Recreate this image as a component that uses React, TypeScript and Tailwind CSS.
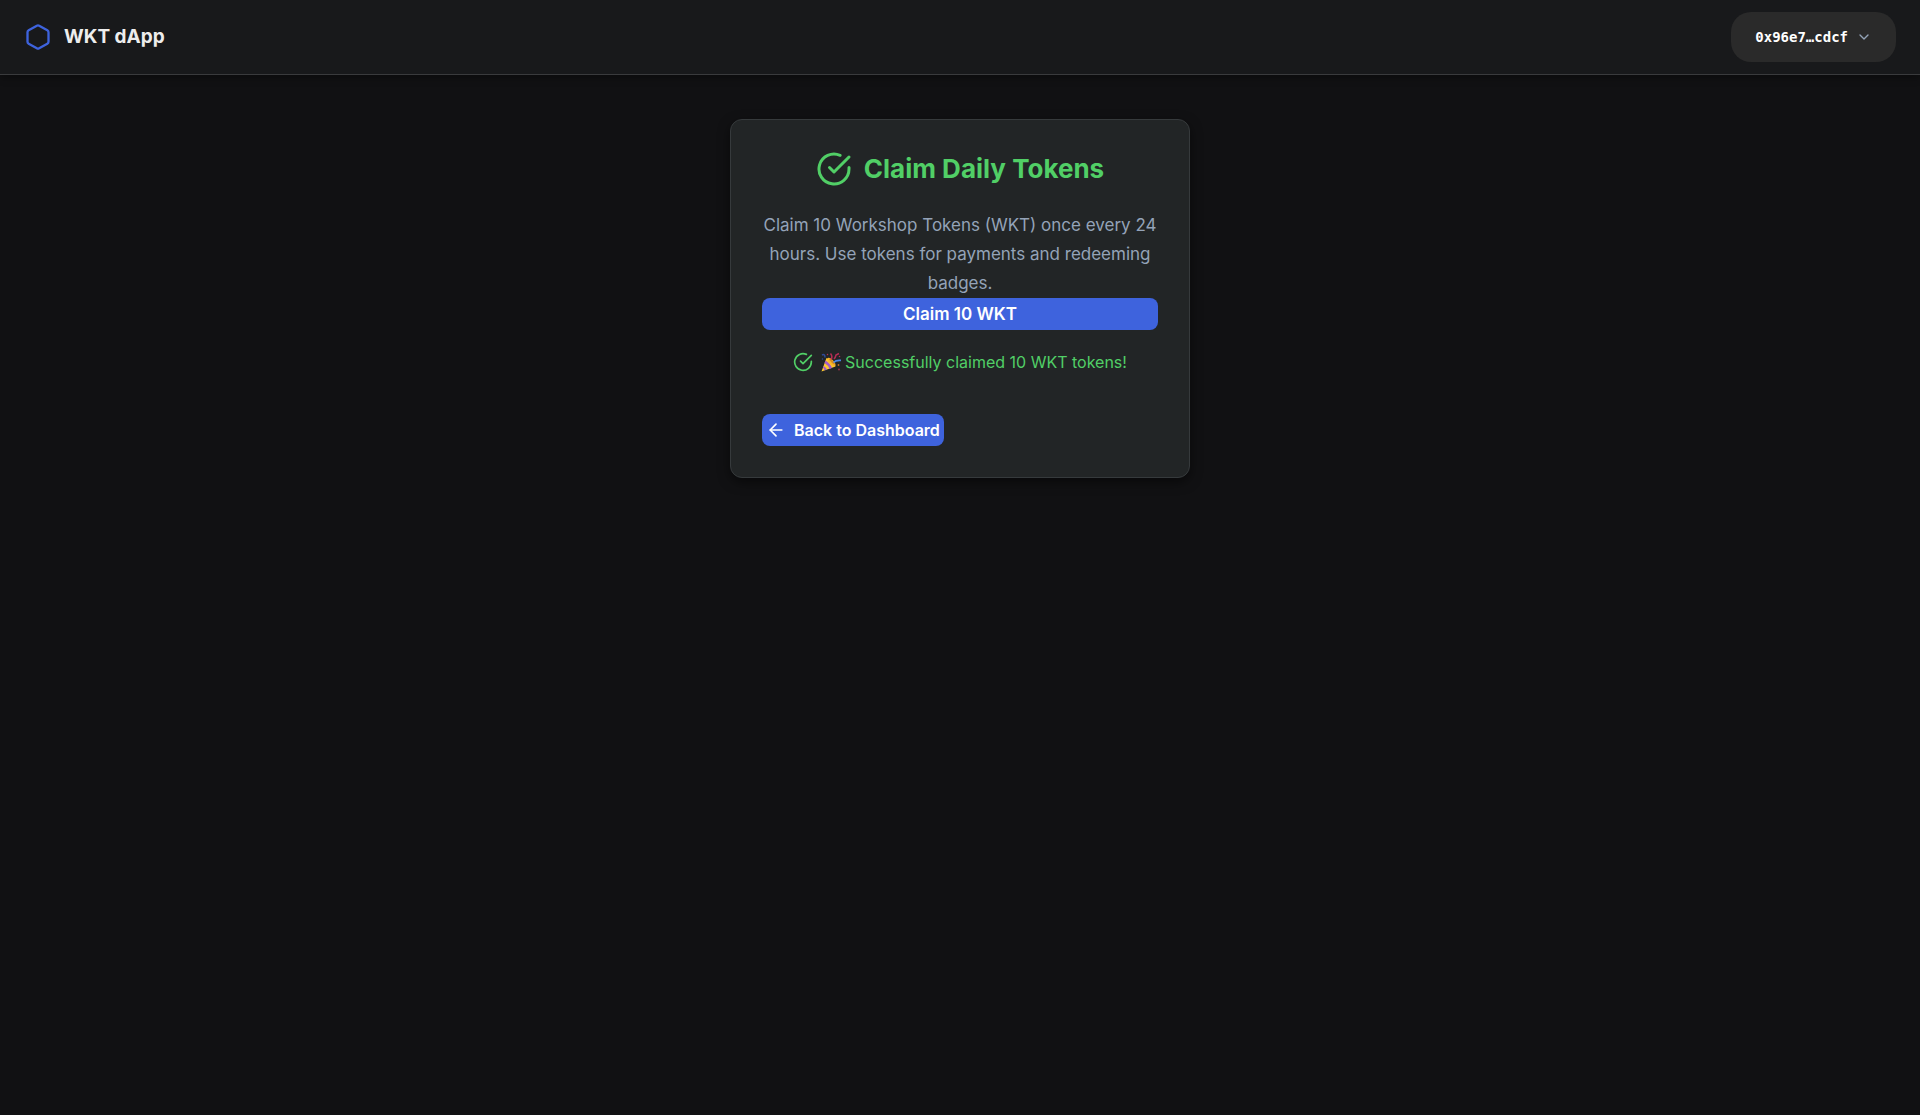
import React from "react";
import { ArrowLeft, ChevronDown, Hexagon } from "lucide-react";

function CheckCircle({ className }: { className: string }) {
  return (
    <svg
      viewBox="0 0 24 24"
      fill="none"
      stroke="currentColor"
      strokeWidth="2"
      strokeLinecap="round"
      strokeLinejoin="round"
      className={className}
      aria-hidden="true"
    >
      <path d="M22 11.08V12a10 10 0 1 1-5.93-9.14" />
      <path d="M22 4 12 14.010l-3-3" />
    </svg>
  );
}

function PartyPopper() {
  return (
    <svg viewBox="0 0 40 40" className="size-5 shrink-0" role="img" aria-label="Party popper">
      <path d="M1 39 11 12Q24 16 29 29Z" fill="#fdc92e" />
      <path d="M9 17Q18 22 22 32L17 34Q14 26 7 22Z" fill="#a45bc4" />
      <path d="M5 28Q10 30 12 35L7 37Q6 33 4 31Z" fill="#a45bc4" />
      <ellipse cx="21" cy="20" rx="4.500" ry="11" transform="rotate(-43 21 20)" fill="#fbb62b" />
      <ellipse cx="22" cy="19" rx="2" ry="8" transform="rotate(-43 22 19)" fill="#d68a20" />
      <path d="M20 15Q24 9 19 3" fill="none" stroke="#b52c55" strokeWidth="3" />
      <path d="M26 14Q29 11 30 6L36 3" fill="none" stroke="#b52c55" strokeWidth="3" />
      <path d="M25 21Q30 16 40 17" fill="none" stroke="#4a86e8" strokeWidth="3.500" />
      <path d="M2 6Q8 3 8 11" fill="none" stroke="#2f4a98" strokeWidth="3" />
      <circle cx="13" cy="5" r="1.500" fill="#b52c55" />
      <circle cx="37" cy="9" r="1.500" fill="#c22a52" />
      <circle cx="35" cy="26" r="1.800" fill="#c2702a" />
      <circle cx="36" cy="35" r="1.800" fill="#a52c4a" />
      <circle cx="3" cy="14" r="1.500" fill="#2f4a98" />
    </svg>
  );
}

export default function App() {
  return (
    <div className="min-h-screen bg-[#111113] font-['Inter',sans-serif] text-[#ededed]">
      <header className="flex items-center justify-between border-b border-[#3a3b3d] bg-[#18191b] px-6 py-3 shadow-[0_2px_8px_rgba(0,0,0,0.4)]">
        <a href="#" className="flex items-center gap-3">
          <Hexagon size={28} strokeWidth={2} className="text-[#3e63dd]" aria-hidden />
          <span className="text-[19px] font-bold">WKT dApp</span>
        </a>
        <button
          type="button"
          className="flex items-center gap-2 rounded-[20px] bg-[#2a2a2a] px-6 py-3 font-['DejaVu_Sans_Mono',monospace] text-sm leading-[26px] font-bold text-white"
        >
          0x96e7…cdcf
          <ChevronDown size={16} className="text-[#94a3b8]" aria-hidden />
        </button>
      </header>

      <main className="flex justify-center px-4 py-11">
        <section className="w-full max-w-[460px] rounded-xl border border-[#363a3c] bg-[#222526] p-[31px] shadow-[0_4px_12px_rgba(0,0,0,0.5)]">
          <h1 className="mb-6 flex items-center justify-center gap-3 text-[26px] leading-9 font-bold text-[#51cf66]">
            <CheckCircle className="size-9" />
            Claim Daily Tokens
          </h1>
          <p className="text-center text-[17px] leading-[29px] text-[#94a3b8]">
            Claim 10 Workshop Tokens (WKT) once every 24 hours. Use tokens for payments and redeeming badges.
          </p>
          <button type="button" className="h-8 w-full rounded-lg bg-[#3e63dd] text-[17px] leading-8 font-semibold text-white">
            Claim 10 WKT
          </button>
          <p role="status" className="mt-5 mb-10 flex items-center justify-center gap-2 text-base leading-6 text-[#51cf66]">
            <CheckCircle className="size-5" />
            <span className="flex items-center gap-1">
              <PartyPopper />
              Successfully claimed 10 WKT tokens!
            </span>
          </p>
          <a
            href="#"
            className="inline-flex h-8 items-center gap-2 rounded-lg bg-[#3e63dd] px-1 align-top text-base font-semibold text-white"
          >
            <ArrowLeft size={20} aria-hidden />
            Back to Dashboard
          </a>
        </section>
      </main>
    </div>
  );
}
